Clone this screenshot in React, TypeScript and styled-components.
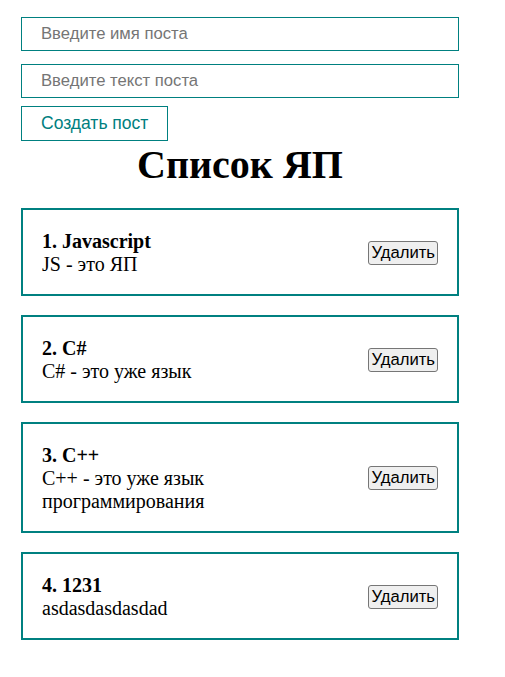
import React from "react";
import styled, { createGlobalStyle } from "styled-components";

const GlobalStyle = createGlobalStyle`
  html, body { margin: 0; padding: 0; background: #fff; }
  body { font-family: "Liberation Serif", "Times New Roman", serif; font-size: 20px; color: #000; }
  * { box-sizing: border-box; }
`;

const Page = styled.div`
  width: 459px;
  padding: 17px 0 30px 21px;
`;

const Form = styled.form`
  display: flex;
  flex-direction: column;
  align-items: flex-start;
  margin: 0;
`;

const Field = styled.input`
  width: 438px;
  height: 34px;
  margin: 0 0 ${(p) => p.$gap}px 0;
  padding: 0 19px;
  border: 1px solid teal;
  border-radius: 0;
  outline: none;
  font-family: "Liberation Sans", Arial, sans-serif;
  font-size: 16.67px;
  color: #000;
  background: #fff;
  &::placeholder { color: #757575; }
`;

const CreateButton = styled.button`
  height: 35px;
  padding: 0 19px;
  border: 1px solid teal;
  border-radius: 0;
  background: #fff;
  color: teal;
  font-family: "Liberation Sans", Arial, sans-serif;
  font-size: 17.5px;
  cursor: pointer;
`;

const Title = styled.h1`
  margin: 1px 0 0 0;
  width: 438px;
  text-align: center;
  font-family: "Liberation Serif", "Times New Roman", serif;
  font-size: 40px;
  font-weight: bold;
  line-height: 46px;
`;

const List = styled.div`
  display: flex;
  flex-direction: column;
  gap: 19px;
  margin-top: 19.5px;
  width: 438px;
`;

const Card = styled.div`
  display: flex;
  justify-content: space-between;
  align-items: center;
  padding: 20px 19px 18px;
  border: 2px solid teal;
`;

const Content = styled.div`
  line-height: 23px;
  font-size: 20px;
  max-width: 200px;
`;

const Name = styled.strong`
  display: block;
  font-weight: bold;
`;

const Body = styled.div``;

const DeleteButton = styled.button`
  flex-shrink: 0;
  height: 24px;
  padding: 0 2px;
  border: 1px solid #767676;
  border-radius: 3px;
  background: #efefef;
  color: #000;
  font-family: "Liberation Sans", Arial, sans-serif;
  font-size: 16.67px;
  line-height: 20px;
  cursor: pointer;
`;

const posts = [
  { id: 1, title: "Javascript", body: "JS - это ЯП" },
  { id: 2, title: "C#", body: "C# - это уже язык" },
  { id: 3, title: "C++", body: "C++ - это уже язык программирования" },
  { id: 4, title: "1231", body: "asdasdasdasdad" },
];

export default function App() {
  return (
    <>
      <GlobalStyle />
      <Page>
        <Form onSubmit={(e) => e.preventDefault()}>
          <Field $gap={13} type="text" placeholder="Введите имя поста" />
          <Field $gap={8} type="text" placeholder="Введите текст поста" />
          <CreateButton type="submit">Создать пост</CreateButton>
        </Form>
        <Title>Список ЯП</Title>
        <List>
          {posts.map((p, i) => (
            <Card key={p.id}>
              <Content>
                <Name>
                  {i + 1}. {p.title}
                </Name>
                <Body>{p.body}</Body>
              </Content>
              <DeleteButton>Удалить</DeleteButton>
            </Card>
          ))}
        </List>
      </Page>
    </>
  );
}
